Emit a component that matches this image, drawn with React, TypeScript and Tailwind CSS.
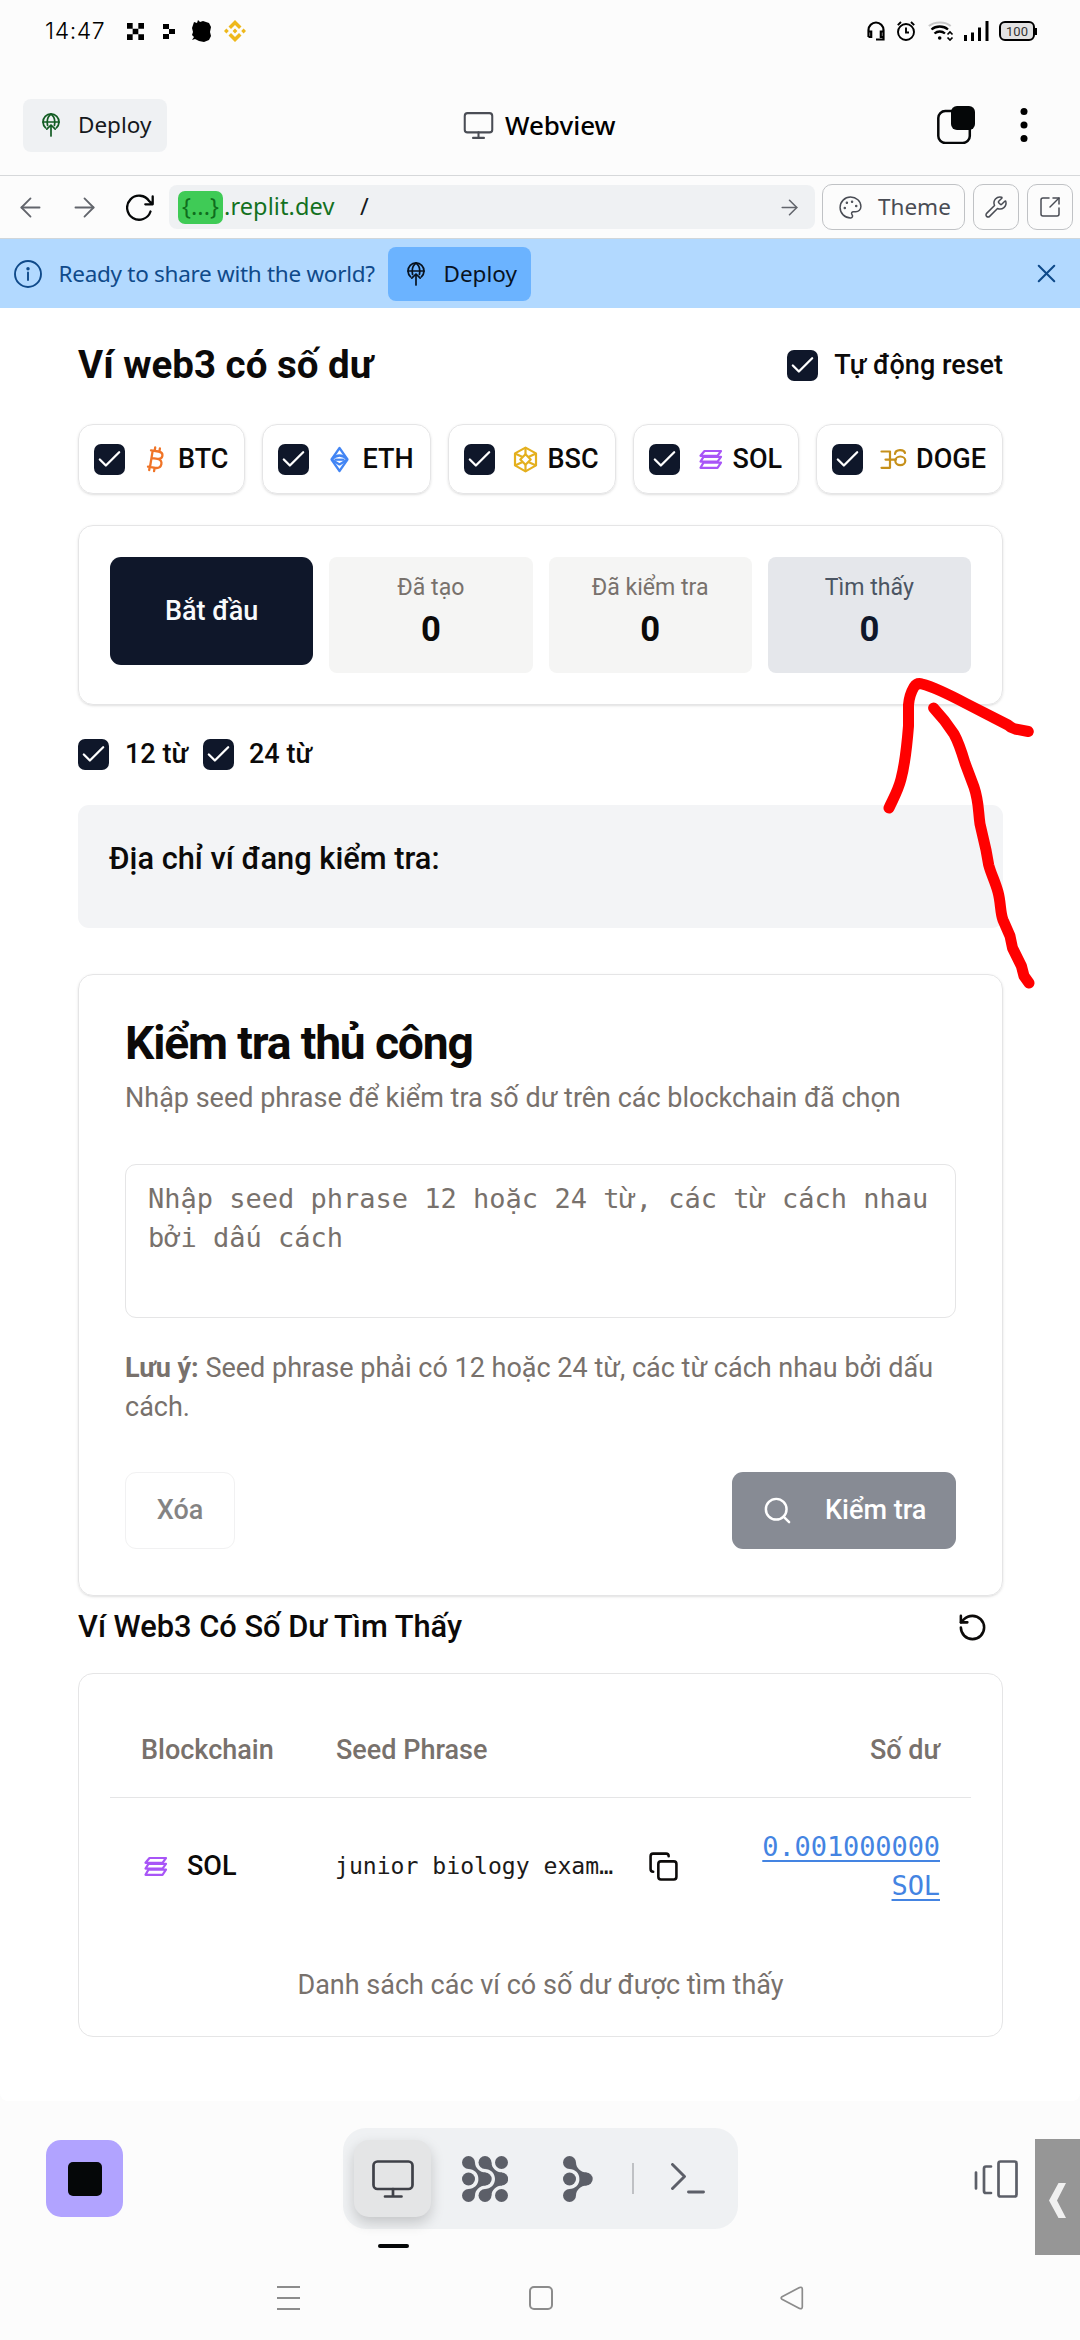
import React from "react";
import {
  ArrowLeft,
  ArrowRight,
  Check,
  Copy,
  Monitor,
  Palette,
  RotateCcw,
  Search,
  SquareArrowOutUpRight,
  Wrench,
  X,
} from "lucide-react";

type IconProps = { className?: string };

const sans = "font-['Noto_Sans',sans-serif]";
const mono = "font-['DejaVu_Sans_Mono',monospace]";

function DeployIcon({ className }: IconProps) {
  return (
    <svg viewBox="0 0 18 24" fill="none" stroke="currentColor" strokeWidth="1.7" strokeLinecap="round" strokeLinejoin="round" className={className}>
      <path d="M3.600 14.800A8 8 0 1 1 14.400 14.800" />
      <path d="M5.600 12.500C4.600 7.500 6 3.200 9 1C12 3.200 13.400 7.500 12.400 12.500" />
      <path d="M1 9H17" />
      <path d="M9 23V12M4.800 16.200L9 12L13.200 16.200" />
    </svg>
  );
}

function BitcoinIcon({ className }: IconProps) {
  return (
    <svg viewBox="0 0 27 27" fill="none" stroke="currentColor" strokeWidth="2.3" strokeLinecap="round" strokeLinejoin="round" className={className}>
      <path d="M9 4.3L16.5 5.5C22.5 6.6 21.2 13.6 15.5 12.9L10.5 12.1M15.5 12.9C22 14.2 20 22.8 13.3 21.9L6 20.7M10.7 4.6L8 21M12.7 4.8L13.2 1.5M17.4 5.6L17.9 2.5M7.7 21L7.2 24M12.6 21.9L12.1 25.2" />
    </svg>
  );
}

function EthereumIcon({ className }: IconProps) {
  return (
    <svg viewBox="0 0 27 27" fill="none" stroke="currentColor" strokeWidth="2.2" strokeLinejoin="round" className={className}>
      <path d="M13.5 2L21.5 13.5L13.5 25L5.5 13.5Z" />
      <path d="M5.5 13.5Q13.5 5.500 21.5 13.5M5.5 13.5L13.5 18.500L21.5 13.5" />
      <path d="M8.500 13.700H18.500" />
    </svg>
  );
}

function BscIcon({ className }: IconProps) {
  return (
    <svg viewBox="0 0 27 27" fill="none" stroke="currentColor" strokeWidth="2.2" strokeLinejoin="round" className={className}>
      <path d="M13.5 1.6L24 7.4V19.4L13.5 25.4L3 19.4V7.4Z" />
      <path d="M13.5 8.3L18.7 13.5L13.5 18.7L8.3 13.5Z" />
      <path d="M13.5 1.6V8.3M13.5 18.7V25.4M3 7.4L10.6 11M24 7.4L16.4 11M3 19.4L10.6 16M24 19.4L16.4 16" />
    </svg>
  );
}

function SolanaIcon({ className }: IconProps) {
  return (
    <svg viewBox="0 0 27 27" fill="none" stroke="currentColor" strokeWidth="2.2" strokeLinejoin="round" className={className}>
      <path d="M7.500 5H24L20.500 9.800H3.500Z" />
      <path d="M6.500 10.800H24L20.500 15.600H3.500Z" />
      <path d="M6.500 16.600H24L20.500 21.800H3.500Z" />
    </svg>
  );
}

function DogeIcon({ className }: IconProps) {
  return (
    <svg viewBox="0 0 27 27" fill="none" stroke="currentColor" strokeWidth="2.2" strokeLinecap="round" strokeLinejoin="round" className={className}>
      <path d="M1.500 5.500H10V21.800H1.500M5.500 13.600H16" />
      <path d="M15 8C15.500 3 24 3 25 7" />
      <ellipse cx="20.300" cy="14.800" rx="5" ry="4.300" />
    </svg>
  );
}

function BranchBlob() {
  return (
    <>
      <circle cx="6.5" cy="6.5" r="6.5" />
      <circle cx="23.2" cy="23" r="6.5" />
      <circle cx="6.5" cy="39.5" r="6.5" />
      <path d="M6.5 13C12 13 16.5 17.3 16.5 23C16.5 28.7 12 33 6.5 33L13 39.5C13 34 18 29.5 23.5 29.5V16.5C18 16.5 13 12 13 6.5Z" />
    </>
  );
}

function CheckBox() {
  return (
    <div className="flex h-[31px] w-[31px] shrink-0 items-center justify-center rounded-[7px] bg-[#0f172a]">
      <Check className="h-[29px] w-[29px] text-white" strokeWidth={1.9} />
    </div>
  );
}

function StatusBar() {
  return (
    <div className="flex h-[62px] items-center">
      <span className="ml-[45px] w-[82px] whitespace-nowrap font-['Inter',sans-serif] text-[23px] font-light tracking-[0.6px] text-black">14:47</span>
      <svg viewBox="0 0 18 18" className="h-[17px] w-[17px]">
        <path d="M0 0h6v6H0zM12 0h6v6h-6zM6 6h6v6H6zM0 12h6v6H0zM12 12h6v6h-6z" fill="#000" />
      </svg>
      <svg viewBox="0 0 12 15" className="ml-[19px] h-[15px] w-[12px]">
        <path d="M0 0h6v5H0zM6 5h6v5H6zM0 10h6v5H0z" fill="#000" />
      </svg>
      <svg viewBox="0 0 20 22" className="ml-[17px] h-[22px] w-[20px]">
        <path d="M2 2L5 3L6 0L8 2L11 1L14 2L17 3L19 7L18 12L19 16L17 20L12 22L7 21L3 19L0 20L2 17L0 15L1 12L0 8Z" fill="#000" />
      </svg>
      <svg viewBox="0 0 22 22" fill="#eeb81c" className="ml-[12px] h-[22px] w-[22px]">
        <path d="M11 0L17.5 6.5L15 9L11 5L7 9L4.5 6.5ZM11 22L17.5 15.5L15 13L11 17L7 13L4.5 15.5ZM11 8.6L13.4 11L11 13.4L8.6 11ZM2.4 8.6L4.8 11L2.4 13.4L0 11ZM19.6 8.6L22 11L19.6 13.4L17.2 11Z" />
      </svg>
      <svg viewBox="0 0 18 20" fill="none" stroke="#000" strokeWidth="2.2" className="ml-auto h-[20px] w-[18px]">
        <path d="M1.5 16V9a7.5 7.5 0 0 1 15 0v9.5H9M1.5 10.5h2.7v5.5H1.5M16.5 10.5h-2.7v5.5h2.7" />
      </svg>
      <svg viewBox="0 0 18 20" fill="none" stroke="#000" strokeWidth="1.9" className="ml-[12px] h-[20px] w-[18px]">
        <circle cx="9" cy="11" r="8" />
        <path d="M9 6.5V11.5H12M.8 4.2L4 1M17.2 4.2L14 1" />
      </svg>
      <svg viewBox="0 0 26 20" fill="none" stroke="#000" strokeWidth="2" className="ml-[13px] h-[20px] w-[26px]">
        <path d="M.8 5C6.500 .2 17.500 .2 22.700 5" stroke="#c9c9c9" />
        <path d="M3.500 8.500C8 4.500 15.500 4.500 20 8.500M6.500 12.500C9.500 9.800 14 9.800 17 12.500" strokeWidth="2.300" />
        <circle cx="11.700" cy="17" r="1.800" fill="#000" stroke="none" />
        <path d="M19.500 13.500L22 11L24.500 13.500M19.500 16.500L22 19L24.500 16.500" strokeWidth="1.700" />
      </svg>
      <svg viewBox="0 0 25 20" className="ml-[10px] h-[20px] w-[25px]">
        <path d="M0 14h3v6H0zM7 11.500h3V20H7zM14 6.500h3V20h-3zM21.500 0h3v20h-3z" fill="#000" />
      </svg>
      <div className="ml-[10px] mr-[43px] flex items-center">
        <div className="flex h-[20px] w-[36px] items-center justify-center rounded-[6px] border-2 border-black bg-[#e2e2e2] font-['Roboto',sans-serif] text-[13px] leading-none text-[#333]">100</div>
        <div className="h-[7px] w-[2px] bg-black" />
      </div>
    </div>
  );
}

function Header() {
  return (
    <div className={`flex h-[114px] items-center border-b border-[#d6d8da] pt-[13px] ${sans}`}>
      <div className="ml-[23px] flex h-[53px] w-[144px] items-center rounded-[8px] bg-[#eff1f3]">
        <DeployIcon className="ml-[19px] h-[24px] w-[18px] text-[#125c22]" />
        <span className="ml-[18px] text-[22.500px] text-[#15181c]">Deploy</span>
      </div>
      <Monitor className="ml-[295px] h-[33px] w-[33px] text-[#4a4d55]" strokeWidth={1.500} />
      <span className="ml-[10px] mt-[1px] w-[113px] whitespace-nowrap text-[26px] font-medium text-black">Webview</span>
      <svg viewBox="0 0 38 38" className="ml-[319px] h-[38px] w-[38px]">
        <rect x="1.300" y="5" width="31.500" height="32" rx="7" fill="none" stroke="#050708" strokeWidth="2.500" />
        <rect x="14" y="0" width="24" height="24" rx="6" fill="#050708" />
      </svg>
      <svg viewBox="0 0 8 36" className="ml-[45px] h-[36px] w-[8px]">
        <circle cx="4" cy="4.500" r="3.500" />
        <circle cx="4" cy="18" r="3.500" />
        <circle cx="4" cy="31.500" r="3.500" />
      </svg>
    </div>
  );
}

function Toolbar() {
  return (
    <div className={`flex h-[63px] items-center border-b border-[#d0d6da] ${sans}`}>
      <ArrowLeft className="ml-[15px] h-[31px] w-[31px] text-[#62656c]" strokeWidth={1.400} />
      <ArrowRight className="ml-[23px] h-[31px] w-[31px] text-[#62656c]" strokeWidth={1.400} />
      <svg viewBox="0 0 28 27" fill="none" stroke="#050708" strokeWidth="2.300" strokeLinecap="round" strokeLinejoin="round" className="ml-[26px] h-[27px] w-[28px]">
        <path d="M24.500 17.500A12 12 0 1 1 23.200 7.200L26.500 10M26.700 2.500V10.300H19.300" />
      </svg>
      <div className="ml-[15px] flex h-[44px] w-[646px] items-center rounded-[8px] bg-[#eff1f3] text-[23.500px]">
        <span className="ml-[9px] flex h-[33px] w-[45px] items-center justify-center rounded-[7px] bg-[#3fcb56] text-[#0f6d1d]">{"{...}"}</span>
        <span className="ml-[1px] w-[136px] tracking-[0.100px] text-[#14711f]">.replit.dev</span>
        <span className="text-[#15181c]">/</span>
        <ArrowRight className="ml-auto mr-[13px] h-[25px] w-[25px] text-[#62656c]" strokeWidth={1.500} />
      </div>
      <div className="ml-[7px] flex h-[46px] w-[143px] items-center rounded-[10px] border border-[#c0c2c5] text-[#494c54]">
        <Palette className="ml-[15px] h-[25px] w-[25px]" strokeWidth={1.400} />
        <span className="ml-[15px] text-[22.500px]">Theme</span>
      </div>
      <div className="ml-[8px] flex h-[46px] w-[46px] items-center justify-center rounded-[10px] border border-[#c0c2c5] text-[#494c54]">
        <Wrench className="h-[24px] w-[24px]" strokeWidth={1.500} />
      </div>
      <div className="ml-[8px] flex h-[46px] w-[46px] items-center justify-center rounded-[10px] border border-[#c0c2c5] text-[#494c54]">
        <SquareArrowOutUpRight className="h-[24px] w-[24px]" strokeWidth={1.500} />
      </div>
    </div>
  );
}

function DeployBanner() {
  return (
    <div className={`flex h-[69px] items-center bg-[#b2d9ff] ${sans}`}>
      <svg viewBox="0 0 28 28" fill="none" stroke="#0f4a8a" strokeWidth="1.900" className="ml-[13.500px] h-[28px] w-[28px]">
        <circle cx="14" cy="14" r="13" />
        <path d="M14 12.500V20" strokeLinecap="round" />
        <circle cx="14" cy="8.700" r="0.800" fill="#0f4a8a" />
      </svg>
      <span className="ml-[17px] w-[329px] whitespace-nowrap text-[22.500px] tracking-[-0.280px] text-[#0f4a8a]">Ready to share with the world?</span>
      <div className="flex h-[54px] w-[143px] items-center rounded-[8px] bg-[#6bb3ff] text-[#07121f]">
        <DeployIcon className="ml-[19px] h-[24px] w-[18px]" />
        <span className="ml-[19px] text-[22.500px]">Deploy</span>
      </div>
      <X className="ml-auto mr-[18px] h-[31px] w-[31px] text-[#0f4a8a]" strokeWidth={1.600} />
    </div>
  );
}

const chips = [
  { name: "BTC", Icon: BitcoinIcon, color: "text-[#f07427]" },
  { name: "ETH", Icon: EthereumIcon, color: "text-[#4285f4]" },
  { name: "BSC", Icon: BscIcon, color: "text-[#e4b01e]" },
  { name: "SOL", Icon: SolanaIcon, color: "text-[#a855f7]" },
  { name: "DOGE", Icon: DogeIcon, color: "text-[#c6901a]" },
];

function Stat({ label, accent }: { label: string; accent?: boolean }) {
  return (
    <div className={`flex h-[116px] flex-col items-center rounded-[8px] pt-[15px] ${accent ? "bg-[#e5e7eb]" : "bg-[#f5f5f4]"}`}>
      <span className={`text-[23.100px] leading-[31px] ${accent ? "text-[#4b5563]" : "text-[#78716c]"}`}>{label}</span>
      <span className={`mt-[3px] text-[34.650px] font-bold leading-[46px] ${accent ? "text-[#0f172a]" : "text-[#0c0a09]"}`}>0</span>
    </div>
  );
}

function ManualCheck() {
  return (
    <div className="mt-[46px] h-[622px] rounded-[15px] border border-[#e5e5e6] px-[46px] shadow-sm">
      <h2 className="mt-[45px] text-[46.200px] font-bold leading-[46px] tracking-[-1.150px]">Kiểm tra thủ công</h2>
      <p className="mt-[13px] whitespace-nowrap text-[27px] leading-[38px] text-[#78716c]">Nhập seed phrase để kiểm tra số dư trên các blockchain đã chọn</p>
      <div className={`mt-[47px] h-[154px] rounded-[11px] border border-[#e5e5e6] px-[22px] pt-[15px] text-[27px] leading-[38.500px] text-[#78716c] ${mono}`}>
        Nhập seed phrase 12 hoặc 24 từ, các từ cách nhau bởi dấu cách
      </div>
      <p className="mt-[31px] text-[27px] leading-[38.500px] text-[#78716c]">
        <b className="font-bold">Lưu ý:</b> Seed phrase phải có 12 hoặc 24 từ, các từ cách nhau bởi dấu cách.
      </p>
      <div className="mt-[45.500px] flex justify-between text-[27px] font-medium">
        <div className="flex h-[77px] w-[110px] items-center justify-center rounded-[11px] border border-[#e5e5e6] opacity-50">Xóa</div>
        <div className="flex h-[77px] w-[224px] items-center rounded-[11px] bg-[#878b94] text-white">
          <Search className="ml-[30px] h-[31px] w-[31px]" strokeWidth={1.900} />
          <span className="ml-[32px]">Kiểm tra</span>
        </div>
      </div>
    </div>
  );
}

function ResultTable() {
  return (
    <div className="h-[364px] rounded-[15px] border border-[#e5e5e6] px-[31px] pt-[31px] text-[27px]">
      <div className="flex h-[93px] items-center border-b border-[#e5e5e6] px-[31px] pb-[1px] font-medium text-[#78716c]">
        <span className="w-[195px]">Blockchain</span>
        <span>Seed Phrase</span>
        <span className="ml-auto">Số dư</span>
      </div>
      <div className="flex h-[137px] items-center px-[31px]">
        <SolanaIcon className="ml-[1px] h-[27px] w-[27px] text-[#a855f7]" />
        <span className="ml-[18px] w-[148px] font-medium">SOL</span>
        <span className={`w-[278px] whitespace-nowrap text-[23.100px] text-[#1c1a19] ${mono}`}>junior biology exam…</span>
        <Copy className="ml-[35px] h-[31px] w-[31px]" strokeWidth={2} />
        <span className={`mb-[1px] ml-auto w-[179px] text-right leading-[39px] tracking-[-0.100px] text-[#4484e2] underline decoration-2 underline-offset-[4px] ${mono}`}>0.001000000 SOL</span>
      </div>
      <p className="mt-[31px] text-center leading-[38px] text-[#78716c]">Danh sách các ví có số dư được tìm thấy</p>
    </div>
  );
}

function WalletPage() {
  return (
    <div className="h-[1793px] rounded-b-[8px] bg-white pl-[78px] pr-[77px] pt-[33px] font-['Roboto',sans-serif] text-[#0c0a09]">
      <div className="flex h-[49px] items-center justify-between">
        <h1 className="pb-[1px] text-[38.500px] font-bold">Ví web3 có số dư</h1>
        <div className="flex items-center">
          <CheckBox />
          <span className="ml-[16px] text-[27px] font-medium">Tự động reset</span>
        </div>
      </div>
      <div className="mt-[34px] flex h-[70px] justify-between text-[27px] font-medium">
        {chips.map(({ name, Icon, color }) => (
          <div key={name} className="flex items-center rounded-[15px] border border-[#e5e5e6] pl-[15px] pr-[16px] shadow-sm">
            <CheckBox />
            <Icon className={`ml-[17px] h-[27px] w-[27px] ${color}`} />
            <span className="ml-[9px]">{name}</span>
          </div>
        ))}
      </div>
      <div className="mt-[31px] grid h-[180px] grid-cols-4 gap-[16px] rounded-[15px] border border-[#e5e5e6] p-[31px] shadow-sm">
        <div className="flex h-[108px] items-center justify-center rounded-[11px] bg-[#0f172a] text-[27px] font-medium text-[#f8fafc]">Bắt đầu</div>
        <Stat label="Đã tạo" />
        <Stat label="Đã kiểm tra" />
        <Stat label="Tìm thấy" accent />
      </div>
      <div className="mt-[34px] flex h-[31px] items-center text-[27px] font-medium">
        <CheckBox />
        <span className="ml-[16px] w-[78px] whitespace-nowrap">12 từ</span>
        <CheckBox />
        <span className="ml-[15px]">24 từ</span>
      </div>
      <div className="mt-[35px] h-[123px] rounded-[11px] bg-[#f3f4f6] px-[31px] pt-[31px] text-[30.800px] font-medium leading-[46px]">Địa chỉ ví đang kiểm tra:</div>
      <ManualCheck />
      <div className="flex h-[77px] items-center justify-between pb-[15px]">
        <h3 className="text-[30.800px] font-medium">Ví Web3 Có Số Dư Tìm Thấy</h3>
        <RotateCcw className="mr-[15px] h-[31px] w-[31px]" strokeWidth={2} />
      </div>
      <ResultTable />
    </div>
  );
}

function Dock() {
  return (
    <div className="relative flex h-[155px] items-center">
      <div className="ml-[46px] flex h-[77px] w-[77px] items-center justify-center rounded-[15px] bg-[#b1a3ff]">
        <div className="h-[34px] w-[34px] rounded-[5px] bg-[#050708]" />
      </div>
      <div className="ml-[220px] flex h-[101px] w-[395px] items-center rounded-[23px] bg-[#eff1f3] pl-[11px]">
        <div className="flex h-[77px] w-[77px] items-center justify-center rounded-[15px] bg-[#e4e5e6] shadow-[0_6px_14px_rgba(0,0,0,0.180)]">
          <svg viewBox="0 0 42 38" fill="none" stroke="#3f4148" strokeWidth="2.700" strokeLinecap="round" className="h-[38px] w-[42px]">
            <rect x="1.500" y="1.500" width="39" height="27.500" rx="4" />
            <path d="M21 29V36M13 36.500H29.500" />
          </svg>
        </div>
        <svg viewBox="0 0 46 46" fill="#5c5f68" className="ml-[31px] h-[46px] w-[46px]">
          <BranchBlob />
          <g transform="translate(16.500 0)">
            <BranchBlob />
          </g>
          <circle cx="6.500" cy="23" r="6.500" />
          <circle cx="39.500" cy="6.500" r="6.500" />
          <circle cx="39.500" cy="39.500" r="6.500" />
        </svg>
        <svg viewBox="0 0 30 46" fill="#5c5f68" className="ml-[55px] h-[46px] w-[30px]">
          <BranchBlob />
          <circle cx="6.500" cy="23" r="6.500" />
        </svg>
        <div className="ml-[39px] h-[31px] w-[2px] bg-[#bfc1c4]" />
        <svg viewBox="0 0 34 31" fill="none" stroke="#5c5f68" strokeWidth="2.900" strokeLinecap="round" strokeLinejoin="round" className="ml-[37px] h-[31px] w-[34px]">
          <path d="M1.500 1.500L13.500 13.500L1.500 25.500M17.500 29H32.500" />
        </svg>
      </div>
      <svg viewBox="0 0 44 38" fill="none" stroke="#5c5f68" strokeWidth="2.700" strokeLinecap="round" strokeLinejoin="round" className="ml-[236px] h-[38px] w-[44px]">
        <rect x="24.500" y="1.500" width="18" height="35" rx="2" />
        <path d="M17 6.500H12C10.500 6.500 10 7 10 8.500V31C10 32.500 10.500 33 12 33H17M2 12.500V28.500" />
      </svg>
      <div className="absolute left-[378px] top-[143px] h-[4px] w-[31px] rounded-full bg-[#050708]" />
      <div className="absolute right-0 top-[38px] flex h-[116px] w-[45px] items-center bg-[#969696]">
        <svg viewBox="0 0 17 35" className="ml-[14px] mt-[6px] h-[35px] w-[17px]">
          <path d="M9.500 0H17L8 17.500L17 35H9.500L0 17.500Z" fill="#f0f0f0" />
        </svg>
      </div>
    </div>
  );
}

function SystemNav() {
  return (
    <div className="flex h-[84px] items-center">
      <svg viewBox="0 0 23 24" className="ml-[277px] h-[24px] w-[23px]">
        <path d="M0 1H23M0 12H23M0 23H23" stroke="#8c8c8c" strokeWidth="2" />
      </svg>
      <div className="ml-[229px] h-[24px] w-[24px] rounded-[5px] border-2 border-[#8c8c8c]" />
      <svg viewBox="0 0 24 24" fill="none" stroke="#8c8c8c" strokeWidth="1.700" strokeLinejoin="round" className="ml-[227px] h-[24px] w-[24px]">
        <path d="M2 10.800L19.500 1.600Q22.300 .500 22.300 3.200V20.800Q22.300 23.500 19.500 22.400L2 13.200Q.300 12 2 10.800Z" />
      </svg>
    </div>
  );
}

function HandDrawnArrow() {
  return (
    <svg viewBox="870 670 180 330" fill="none" stroke="#ff0000" strokeWidth="11" strokeLinecap="round" strokeLinejoin="round" className="pointer-events-none absolute left-[870px] top-[670px] h-[330px] w-[180px]">
      <path d="M889 808C893 799 898 791 901 779C905 764 907 745 908.500 726L908.500 705C909 699 911 692 914 687Q917 682.500 922 684C930 686 950 695 967 704L1008 725Q1011 728 1015 729L1028.300 731.500" />
      <path d="M933.600 708Q945 720 954 734Q959 743 965 763L974 787C979 802 978 810 980 824L986 850L988.700 865C991 874 995 881 998 892C1001 903 1000 912 1003 920L1010 936L1012.500 948L1021.400 966L1024 976L1029 983" />
    </svg>
  );
}

export default function App() {
  return (
    <div className="relative h-[2340px] w-[1080px] overflow-hidden bg-[#fcfcfc]">
      <StatusBar />
      <Header />
      <Toolbar />
      <DeployBanner />
      <WalletPage />
      <Dock />
      <SystemNav />
      <HandDrawnArrow />
    </div>
  );
}
